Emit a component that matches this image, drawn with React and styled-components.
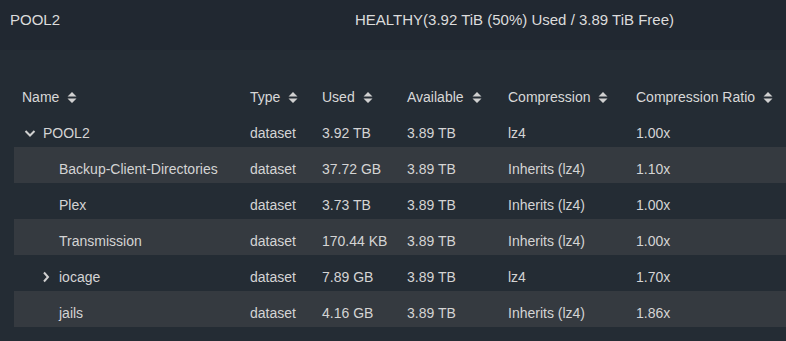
import React from "react";
import styled, { createGlobalStyle } from "styled-components";

const GlobalStyle = createGlobalStyle`
  body {
    margin: 0;
    background: #242c34;
    font-family: "Liberation Sans", Arial, sans-serif;
  }
`;

const Page = styled.div`
  width: 786px;
  height: 341px;
  background: #242c34;
  overflow: hidden;
`;

const PoolHeader = styled.div`
  display: flex;
  align-items: center;
  height: 50px;
  padding: 0 0 12px 10px;
  box-sizing: border-box;
  background: #212831;
  color: #dcdcdc;
  font-family: "Liberation Sans Narrow", "Liberation Sans", sans-serif;
  font-size: 15px;
`;

const PoolName = styled.div`
  width: 345px;
`;

const Table = styled.div`
  margin: 25px 0 0 14px;
`;

const Row = styled.div`
  display: grid;
  grid-template-columns: 228px 72px 85px 101px 128px 1fr;
  height: 36px;
  box-sizing: border-box;
  padding-top: 8px;
  align-items: center;
  background: ${(p) => (p.$striped ? "#353a40" : "transparent")};
  color: #d4d4d4;
  font-size: 14px;
`;

const Cell = styled.div`
  padding-left: 8px;
  display: flex;
  align-items: center;
  white-space: nowrap;
`;

const HeadCell = styled(Cell)`
  color: #d8d8d8;
`;

const NameCell = styled(Cell)`
  padding-left: ${(p) => 8 + p.$indent}px;
`;

const Toggle = styled.span`
  display: inline-flex;
  width: 16px;
  margin-right: 5px;
  justify-content: center;
`;

const SortIcon = () => (
  <svg width="10" height="11" viewBox="0 0 10 11" style={{ marginLeft: 8 }}>
    <path d="M5 0 L9.5 4.5 H0.5 Z M5 11 L9.5 6.5 H0.5 Z" fill="#d0d0d0" />
  </svg>
);

const Chevron = ({ open }) => (
  <svg width="12" height="12" viewBox="0 0 12 12">
    {open ? (
      <path d="M1.5 4 L6 8.5 L10.5 4" stroke="#d0d0d0" strokeWidth="2" fill="none" />
    ) : (
      <path d="M4 1.5 L8 6 L4 10.5" stroke="#d0d0d0" strokeWidth="2" fill="none" />
    )}
  </svg>
);

const columns = ["Name", "Type", "Used", "Available", "Compression", "Compression Ratio"];

const rows = [
  { name: "POOL2", indent: 0, toggle: "open", used: "3.92 TB", comp: "lz4", ratio: "1.00x" },
  { name: "Backup-Client-Directories", indent: 16, used: "37.72 GB", comp: "Inherits (lz4)", ratio: "1.10x" },
  { name: "Plex", indent: 16, used: "3.73 TB", comp: "Inherits (lz4)", ratio: "1.00x" },
  { name: "Transmission", indent: 16, used: "170.44 KB", comp: "Inherits (lz4)", ratio: "1.00x" },
  { name: "iocage", indent: 16, toggle: "closed", used: "7.89 GB", comp: "lz4", ratio: "1.70x" },
  { name: "jails", indent: 16, used: "4.16 GB", comp: "Inherits (lz4)", ratio: "1.86x" },
];

const App = () => {
  return (
    <Page>
      <GlobalStyle />
      <PoolHeader>
        <PoolName>POOL2</PoolName>
        <div>HEALTHY(3.92 TiB (50%) Used / 3.89 TiB Free)</div>
      </PoolHeader>
      <Table>
        <Row>
          {columns.map((c) => (
            <HeadCell key={c}>
              {c}
              <SortIcon />
            </HeadCell>
          ))}
        </Row>
        {rows.map((r, i) => (
          <Row key={r.name} $striped={i % 2 === 1}>
            <NameCell $indent={r.indent}>
              <Toggle>{r.toggle && <Chevron open={r.toggle === "open"} />}</Toggle>
              {r.name}
            </NameCell>
            <Cell>dataset</Cell>
            <Cell>{r.used}</Cell>
            <Cell>3.89 TB</Cell>
            <Cell>{r.comp}</Cell>
            <Cell>{r.ratio}</Cell>
          </Row>
        ))}
      </Table>
    </Page>
  );
};

export default App;
